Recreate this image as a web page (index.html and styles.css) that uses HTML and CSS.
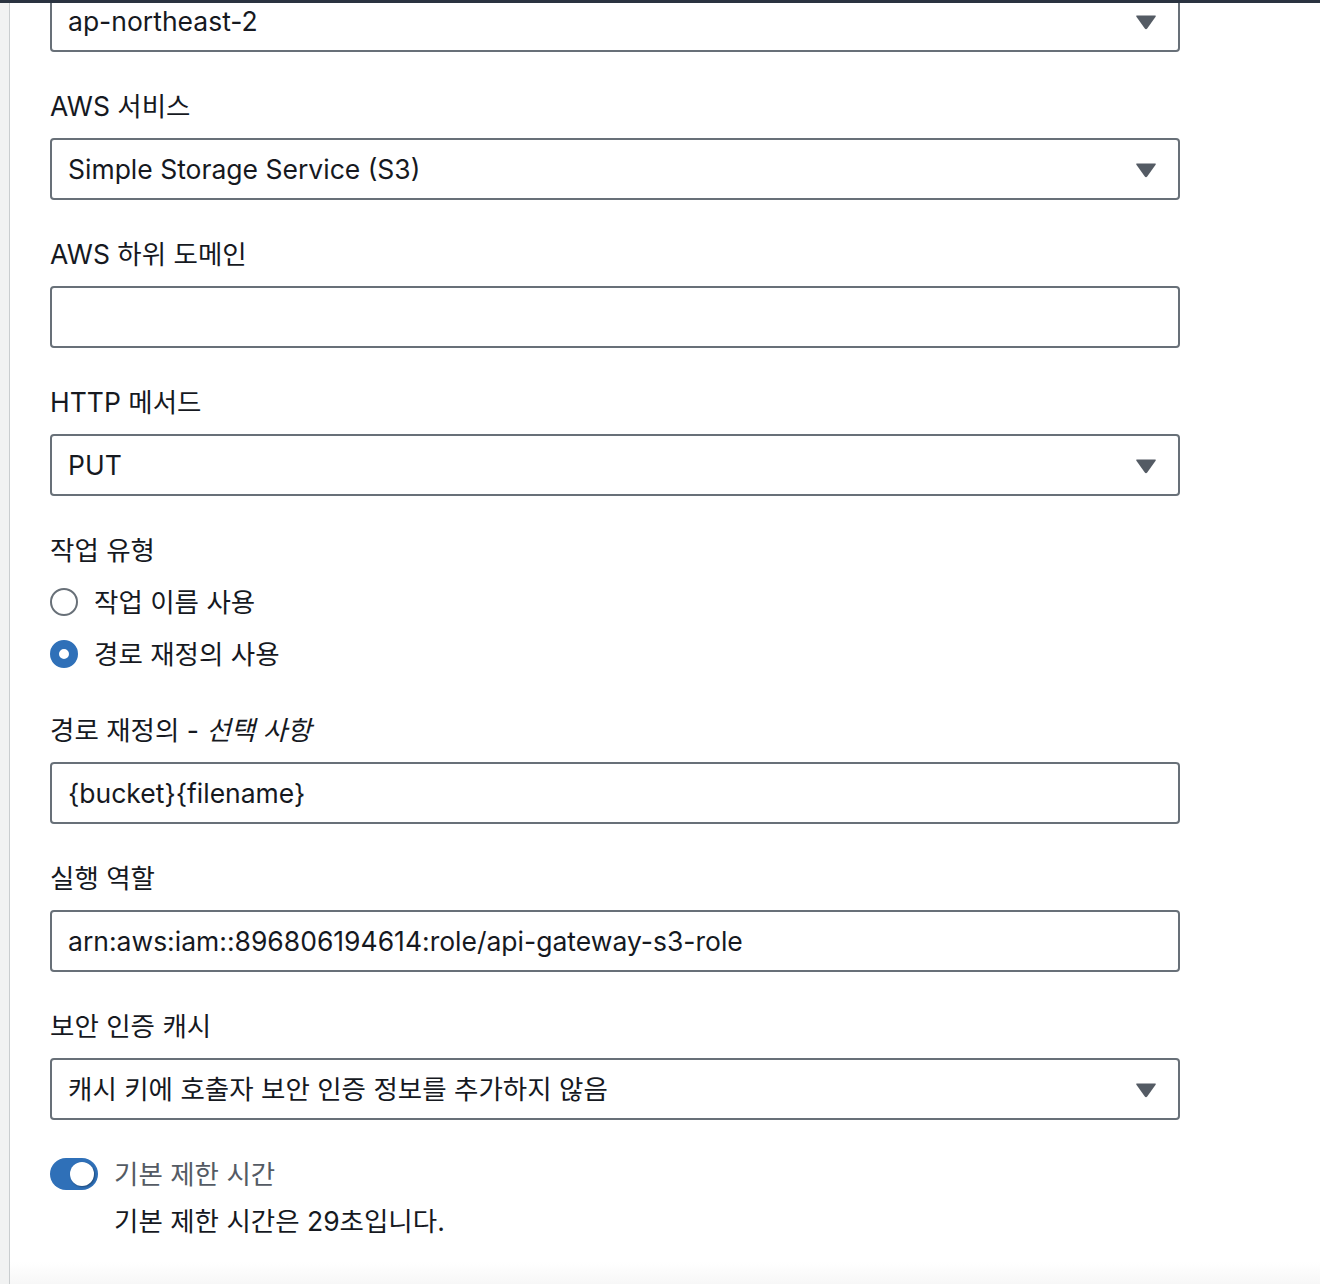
FILE: index.html
```html
<!DOCTYPE html>
<html lang="ko">
<head>
<meta charset="utf-8">
<link rel="stylesheet" href="styles.css">
</head>
<body>
<div class="topbar"></div>
<div class="page">
  <div class="rail"></div>
  <main class="main">
    <form class="form">
      <div class="field first">
        <div class="box select">
          <span class="value">ap-northeast-2</span>
          <svg class="caret" width="22" height="16" viewBox="0 0 22 16"><path d="M2 1.5 H20 Q21.5 1.5 20.6 2.8 L12.2 14.4 Q11 16 9.8 14.4 L1.4 2.8 Q0.5 1.5 2 1.5 Z" fill="#545b64"/></svg>
        </div>
      </div>
      <div class="field">
        <label class="label">AWS 서비스</label>
        <div class="box select">
          <span class="value">Simple Storage Service (S3)</span>
          <svg class="caret" width="22" height="16" viewBox="0 0 22 16"><path d="M2 1.5 H20 Q21.5 1.5 20.6 2.8 L12.2 14.4 Q11 16 9.8 14.4 L1.4 2.8 Q0.5 1.5 2 1.5 Z" fill="#545b64"/></svg>
        </div>
      </div>
      <div class="field">
        <label class="label">AWS 하위 도메인</label>
        <div class="box"><span class="value"></span></div>
      </div>
      <div class="field">
        <label class="label">HTTP 메서드</label>
        <div class="box select">
          <span class="value">PUT</span>
          <svg class="caret" width="22" height="16" viewBox="0 0 22 16"><path d="M2 1.5 H20 Q21.5 1.5 20.6 2.8 L12.2 14.4 Q11 16 9.8 14.4 L1.4 2.8 Q0.5 1.5 2 1.5 Z" fill="#545b64"/></svg>
        </div>
      </div>
      <div class="field radios">
        <label class="label">작업 유형</label>
        <div class="radio-row"><span class="radio"></span><span class="radio-text">작업 이름 사용</span></div>
        <div class="radio-row"><span class="radio checked"></span><span class="radio-text">경로 재정의 사용</span></div>
      </div>
      <div class="field">
        <label class="label">경로 재정의 - <i>선택 사항</i></label>
        <div class="box"><span class="value">{bucket}{filename}</span></div>
      </div>
      <div class="field">
        <label class="label">실행 역할</label>
        <div class="box"><span class="value">arn:aws:iam::896806194614:role/api-gateway-s3-role</span></div>
      </div>
      <div class="field">
        <label class="label">보안 인증 캐시</label>
        <div class="box select">
          <span class="value">캐시 키에 호출자 보안 인증 정보를 추가하지 않음</span>
          <svg class="caret" width="22" height="16" viewBox="0 0 22 16"><path d="M2 1.5 H20 Q21.5 1.5 20.6 2.8 L12.2 14.4 Q11 16 9.8 14.4 L1.4 2.8 Q0.5 1.5 2 1.5 Z" fill="#545b64"/></svg>
        </div>
      </div>
      <div class="toggle-block">
        <div class="toggle-row"><span class="toggle"><span class="knob"></span></span><span class="toggle-text">기본 제한 시간</span></div>
        <div class="toggle-desc">기본 제한 시간은 29초입니다.</div>
      </div>
    </form>
  </main>
</div>
</body>
</html>
```

FILE: styles.css
```css
* { box-sizing: border-box; }
html, body { margin: 0; padding: 0; }
body {
  font-family: "Inter", "Noto Sans CJK KR", sans-serif;
  font-size: 26.5px;
  color: #16191f;
  background: #ffffff;
  height: 1284px;
  overflow: hidden;
  position: relative;
}
.topbar {
  position: absolute;
  top: 0; left: 0; right: 0;
  height: 3px;
  background: #2a3340;
  z-index: 2;
}
.page {
  display: flex;
  height: 1284px;
}
.rail {
  width: 10px;
  flex: none;
  background: #f1f2f2;
  border-right: 1px solid #c9cdcf;
}
.main {
  flex: 1;
  padding-left: 40px;
  background: linear-gradient(to bottom, #ffffff 0, #ffffff 1262px, #f7f7f7 1284px);
}
.form {
  width: 1130px;
  margin-top: -10px;
  display: flex;
  flex-direction: column;
}
.field {
  display: flex;
  flex-direction: column;
  margin-bottom: 38px;
}
.label {
  display: block;
  height: 32px;
  line-height: 32px;
  margin-bottom: 16px;
  white-space: nowrap;
}
.label i { font-style: italic; }
.box {
  height: 62px;
  border: 2px solid #687078;
  border-radius: 4px;
  display: flex;
  align-items: center;
  padding: 0 16px;
  background: #fff;
}
.value {
  flex: 1;
  line-height: 32px;
  white-space: nowrap;
}
.caret {
  flex: none;
  margin-right: 5px;
  margin-top: 2px;
}
.radios { margin-bottom: 40px; }
.radios .label { margin-bottom: 16px; }
.radio-row {
  height: 40px;
  display: flex;
  align-items: center;
  gap: 16px;
}
.radio-row + .radio-row { margin-top: 12px; }
.radio {
  width: 28px;
  height: 28px;
  border-radius: 50%;
  border: 2px solid #687078;
  flex: none;
  background: #fff;
}
.radio.checked {
  border: 9px solid #2f70b8;
}
.radio-text { line-height: 32px; }
.toggle-block {
  margin-top: -4px;
}
.toggle-row {
  height: 40px;
  display: flex;
  align-items: center;
  gap: 16px;
}
.toggle {
  width: 48px;
  height: 32px;
  border-radius: 16px;
  background: #2f70b8;
  flex: none;
  display: flex;
  align-items: center;
  justify-content: flex-end;
  padding-right: 4px;
}
.knob {
  width: 24px;
  height: 24px;
  border-radius: 50%;
  background: #fff;
  box-shadow: 1px 1px 2px rgba(0, 0, 0, 0.35);
}
.toggle-text {
  color: #545b64;
  line-height: 32px;
}
.toggle-desc {
  margin-top: 11px;
  margin-left: 64px;
  line-height: 32px;
}
```
